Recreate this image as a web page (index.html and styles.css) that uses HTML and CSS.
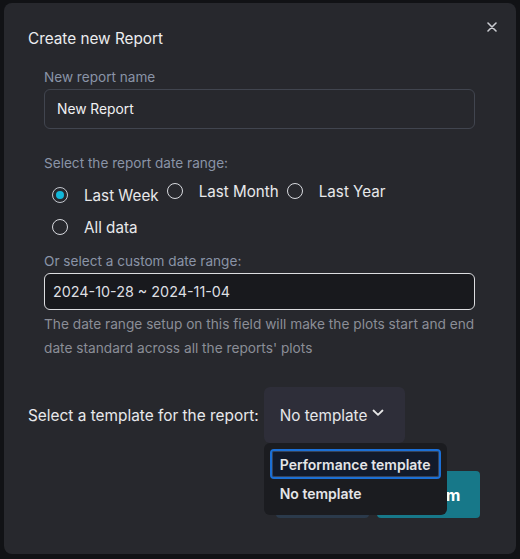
FILE: index.html
```html
<!DOCTYPE html>
<html lang="en">
<head>
<meta charset="utf-8">
<title>Create new Report</title>
<link rel="stylesheet" href="styles.css">
</head>
<body>
<div class="modal">
  <button class="close" aria-label="Close">
    <svg width="10" height="10" viewBox="0 0 10 10"><path d="M1 1 L9 9 M9 1 L1 9" stroke="#c9cbd0" stroke-width="1.6" stroke-linecap="round"/></svg>
  </button>
  <h2 class="title">Create new Report</h2>
  <div class="body">
    <label class="label">New report name</label>
    <div class="input">New Report</div>

    <div class="label section">Select the report date range:</div>
    <div class="radios">
      <div class="radio-row first">
        <label class="radio shift"><span class="circle checked"></span><span>Last Week</span></label>
        <label class="radio"><span class="circle"></span><span>Last Month</span></label>
        <label class="radio"><span class="circle"></span><span>Last Year</span></label>
      </div>
      <div class="radio-row">
        <label class="radio"><span class="circle"></span><span>All data</span></label>
      </div>
    </div>

    <div class="label section2">Or select a custom date range:</div>
    <div class="date-input">2024-10-28 ~ 2024-11-04</div>
    <p class="helper">The date range setup on this field will make the plots start and end date standard across all the reports' plots</p>
  </div>

  <div class="template-row">
    <span class="template-label">Select a template for the report:</span>
    <div class="select-wrap">
      <div class="select">No template
        <svg class="chev" width="14" height="10" viewBox="0 0 14 10"><path d="M2.5 2.5 L7 6.8 L11.5 2.5" fill="none" stroke="#e6e6e6" stroke-width="1.8" stroke-linecap="round" stroke-linejoin="round"/></svg>
      </div>
      <div class="menu">
        <div class="item active">Performance template</div>
        <div class="item">No template</div>
      </div>
    </div>
  </div>

  <div class="footer">
    <button class="btn cancel">Cancel</button>
    <button class="btn confirm">Confirm</button>
  </div>
</div>
</body>
</html>
```

FILE: styles.css
```css
* { box-sizing: border-box; }
html, body { margin: 0; padding: 0; }
body {
  background: #111215;
  font-family: Inter, "Noto Sans", sans-serif;
  width: 520px;
  height: 559px;
  overflow: hidden;
}
.modal {
  position: relative;
  margin: 3px 4px;
  width: 512px;
  height: 551px;
  background: #27282d;
  border-radius: 8px;
  padding-top: 24px;
}
.close {
  position: absolute;
  top: 12px;
  right: 12px;
  width: 24px;
  height: 24px;
  background: transparent;
  border: 0;
  padding: 0;
  display: flex;
  align-items: center;
  justify-content: center;
}
.title {
  margin: 0;
  padding-left: 24px;
  font-size: 15.3px;
  line-height: 24px;
  font-weight: 400;
  color: #ecedef;
}
.body {
  padding: 0 41px 0 40px;
}
.label {
  display: block;
  margin-top: 16px;
  margin-bottom: 2px;
  font-size: 13.6px;
  line-height: 20px;
  color: #8a94a7;
}
.label.section { margin-top: 24px; margin-bottom: 6px; }
.label.section2 { margin-top: 12px; margin-bottom: 2px; }
.input {
  height: 40px;
  border: 1px solid #41454f;
  border-radius: 6px;
  padding-left: 12px;
  display: flex;
  align-items: center;
  font-size: 13.8px;
  color: #f0f0f2;
}
.radios {
  display: flex;
  flex-direction: column;
  gap: 8px;
  padding-left: 8px;
}
.radio-row {
  display: flex;
  align-items: flex-start;
  gap: 8px;
}
.radio {
  display: flex;
  align-items: center;
  gap: 16px;
  height: 24px;
  font-size: 15.2px;
  color: #e8e9eb;
}
.radio.shift { margin-top: 4px; }
.circle {
  width: 16px;
  height: 16px;
  border-radius: 50%;
  border: 1.5px solid #d8dadf;
  display: flex;
  align-items: center;
  justify-content: center;
}
.circle.checked { border-color: #c3c7ce; }
.circle.checked::after {
  content: "";
  width: 8px;
  height: 8px;
  border-radius: 50%;
  background: #12b8da;
}
.date-input {
  height: 37px;
  background: #18191d;
  border: 1px solid #dcdde0;
  border-radius: 6px;
  padding-left: 8px;
  display: flex;
  align-items: center;
  font-size: 14.35px;
  color: #dedfe2;
}
.helper {
  margin: 2px 0 0 0;
  font-size: 13.7px;
  line-height: 24px;
  color: #8b8e97;
}
.template-row {
  margin-top: 27px;
  padding-left: 24px;
  display: flex;
  align-items: center;
  gap: 5px;
}
.template-label {
  font-size: 15.4px;
  color: #e8e9eb;
}
.select-wrap { position: relative; }
.select {
  height: 56px;
  width: 141px;
  background: #2e2e39;
  border-radius: 6px;
  padding-left: 16px;
  display: flex;
  align-items: center;
  font-size: 15.3px;
  color: #e6e7ea;
}
.chev { margin-left: 4px; margin-top: -4px; }
.menu {
  position: absolute;
  left: 0;
  top: 100%;
  width: 183px;
  height: 72px;
  background: #1b1c20;
  border-radius: 6px;
  padding: 6px;
  z-index: 5;
}
.item {
  height: 28px;
  padding-left: 8px;
  display: flex;
  align-items: center;
  font-size: 14px;
  font-weight: 600;
  color: #e4e5e8;
  border: 2px solid transparent;
  border-radius: 4px;
}
.item.active {
  height: 30px;
  background: #121a2b;
  border-color: #1b6fd6;
  box-shadow: inset 0 0 0 1px rgba(160, 190, 240, 0.25);
}
.footer {
  margin-top: 28px;
  padding-right: 36px;
  display: flex;
  justify-content: flex-end;
  gap: 8px;
}
.btn {
  height: 47px;
  border: 0;
  border-radius: 4px;
  font-family: inherit;
  font-size: 16px;
  font-weight: 700;
  color: #ffffff;
}
.cancel { width: 93px; background: #2b3a4b; }
.confirm { width: 103px; background: #177889; }
```
